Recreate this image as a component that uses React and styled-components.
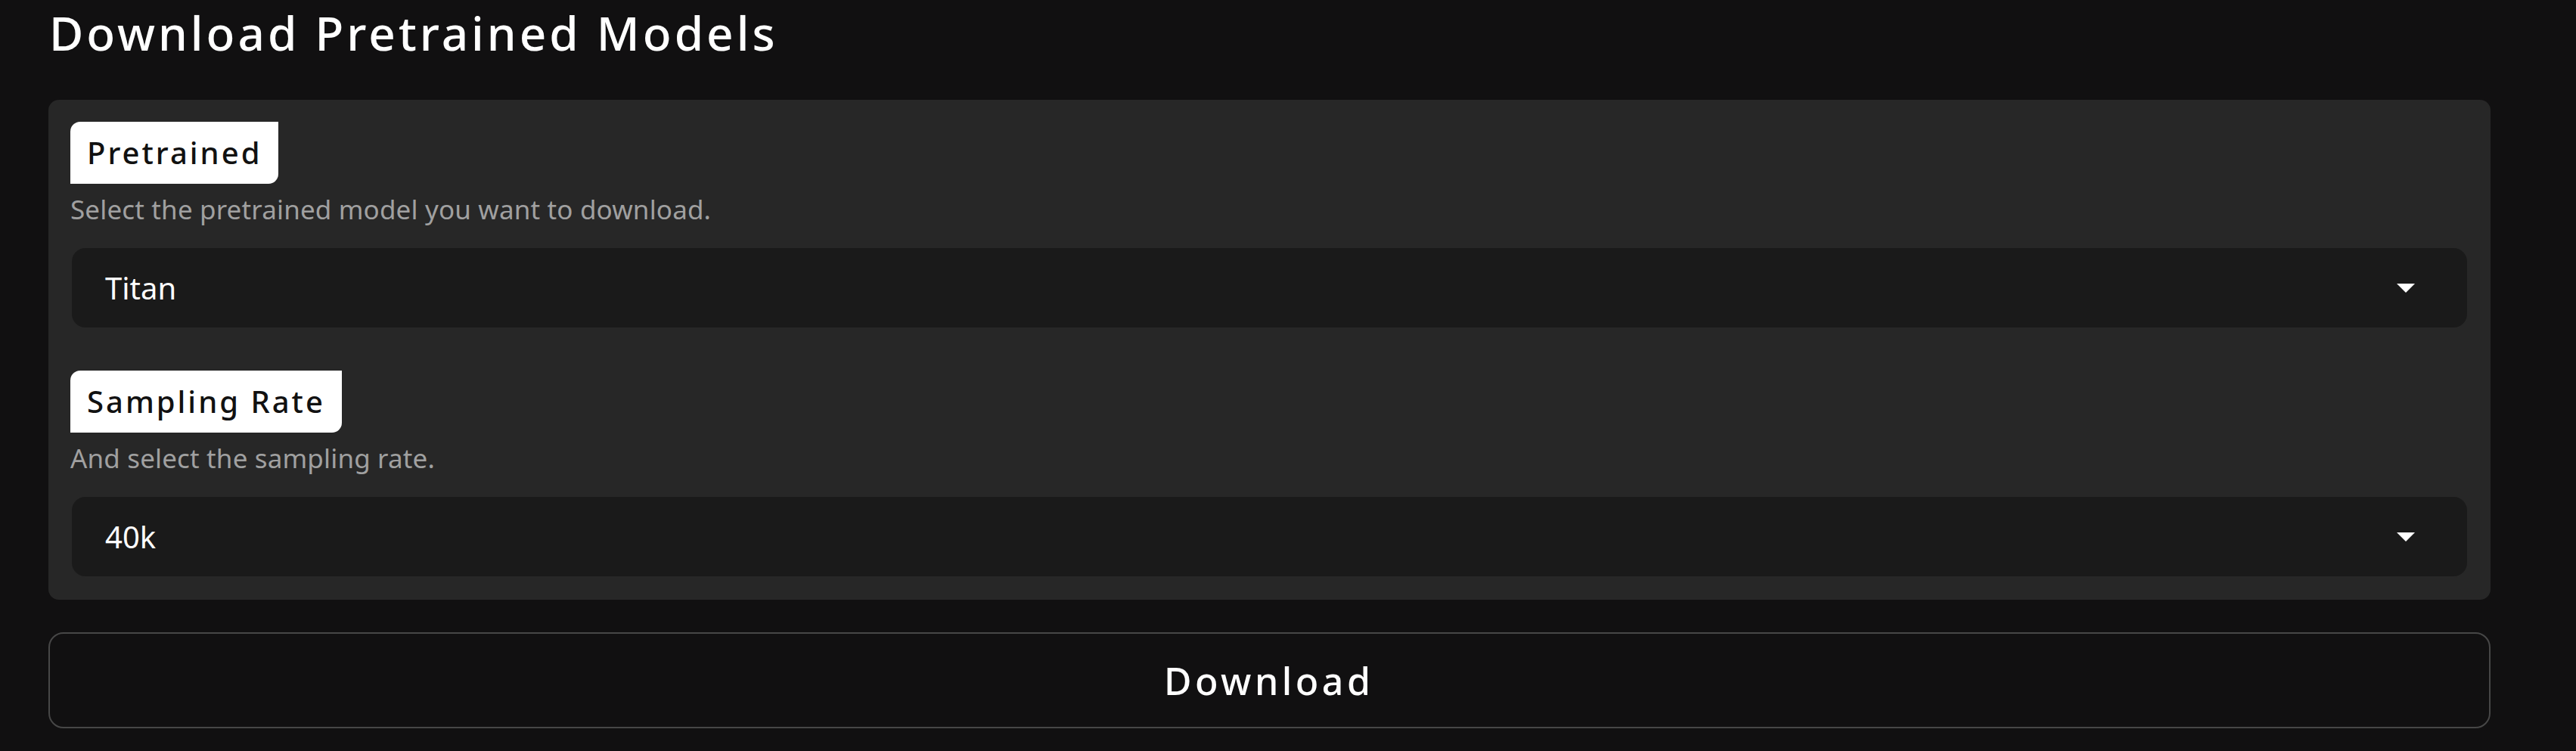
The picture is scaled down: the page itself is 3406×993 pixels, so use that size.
import React from "react";
import styled, { createGlobalStyle } from "styled-components";

const Global = createGlobalStyle`
  html, body { margin: 0; padding: 0; background: #111011; }
  body { font-family: "Noto Sans", "Liberation Sans", sans-serif; color: #fff; }
  * { box-sizing: border-box; }
`;

const Page = styled.div`
  width: 3406px;
  min-height: 993px;
  background: #111011;
  padding: 12px 0 0 64px;
`;

const Column = styled.div`
  width: 3229px;
  display: flex;
  flex-direction: column;
`;

const Title = styled.h2`
  margin: 0;
  font-family: "Noto Sans", sans-serif;
  font-weight: 500;
  font-size: 62px;
  line-height: 62px;
  letter-spacing: 4px;
  color: #fff;
  padding-left: 1px;
`;

const Panel = styled.div`
  margin-top: 58px;
  background: #272727;
  border-radius: 14px;
  padding: 29px 29px 31px 29px;
  display: flex;
  flex-direction: column;
`;

const Field = styled.div`
  display: flex;
  flex-direction: column;
  align-items: flex-start;
  & + & { margin-top: 57px; }
`;

const Badge = styled.span`
  display: inline-flex;
  align-items: center;
  height: 82px;
  padding: 0 22px 0 22px;
  background: #ffffff;
  color: #111;
  border-radius: 13px 0 13px 0;
  font-family: "Noto Sans", sans-serif;
  font-weight: 500;
  font-size: 40px;
  line-height: 1;
  letter-spacing: 3px;
`;

const Info = styled.div`
  margin-top: 10px;
  height: 48px;
  font-family: "Noto Sans", sans-serif;
  font-size: 35px;
  line-height: 48px;
  color: #a0a0a0;
  letter-spacing: 0.15px;
`;

const Select = styled.div`
  align-self: stretch;
  margin: 27px 2px 0 2px;
  height: 105px;
  background: #1a1a1a;
  border-radius: 18px;
  display: flex;
  align-items: center;
  justify-content: space-between;
  padding: 0 69px 0 44px;
`;

const Value = styled.span`
  font-family: "Noto Sans", sans-serif;
  font-size: 40px;
  line-height: 1;
  color: #fff;
`;

const Caret = styled.svg`
  width: 24px;
  height: 12px;
  display: block;
`;

const Button = styled.button`
  margin-top: 43px;
  height: 127px;
  width: 100%;
  background: #111011;
  border: 2px solid #474747;
  border-radius: 20px;
  color: #fff;
  font-family: "Noto Sans", sans-serif;
  font-weight: 500;
  font-size: 50px;
  letter-spacing: 4.5px;
  padding-left: 4.5px;
  display: flex;
  align-items: center;
  justify-content: center;
  cursor: pointer;
`;

const fields = [
  {
    label: "Pretrained",
    info: "Select the pretrained model you want to download.",
    value: "Titan",
  },
  {
    label: "Sampling Rate",
    info: "And select the sampling rate.",
    value: "40k",
  },
];

export default function App() {
  return (
    <>
      <Global />
      <Page>
        <Column>
          <Title>Download Pretrained Models</Title>
          <Panel>
            {fields.map((f) => (
              <Field key={f.label}>
                <Badge>{f.label}</Badge>
                <Info>{f.info}</Info>
                <Select>
                  <Value>{f.value}</Value>
                  <Caret viewBox="0 0 24 12">
                    <path d="M0 0 L24 0 L12 12 Z" fill="#fff" />
                  </Caret>
                </Select>
              </Field>
            ))}
          </Panel>
          <Button>Download</Button>
        </Column>
      </Page>
    </>
  );
}
